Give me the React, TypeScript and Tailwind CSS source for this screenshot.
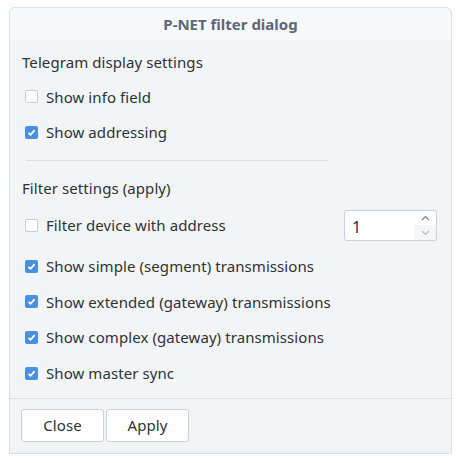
import React from "react";

function Check({ on }: { on: boolean }) {
  return on ? (
    <span className="flex h-[13px] w-[13px] items-center justify-center rounded-[2px] bg-[#4a90e2]">
      <svg width="9" height="9" viewBox="0 0 9 9">
        <path d="M1.5 4.8 L3.6 6.8 L7.6 2.2" fill="none" stroke="white" strokeWidth="1.8" />
      </svg>
    </span>
  ) : (
    <span className="block h-[13px] w-[13px] rounded-[2px] border border-[#c9ced8] bg-white" />
  );
}

function Row({ on, label }: { on: boolean; label: string }) {
  return (
    <div className="flex h-[35.7px] items-center">
      <Check on={on} />
      <span className="ml-[8px]">{label}</span>
    </div>
  );
}

export default function App() {
  return (
    <div
      className="h-[463px] w-[461px] bg-white pl-[9px] pt-[7px] text-[15px] tracking-[0.08px] text-[#2e3436]"
      style={{ fontFamily: '"Noto Sans", "Open Sans", sans-serif' }}
    >
      <div className="flex h-[447px] w-[443px] flex-col rounded-t-[6px] border border-[#dcdfe4] bg-[#f3f4f6]">
        <div className="flex h-[32px] items-center justify-center rounded-t-[6px] bg-[#f8f9fa] text-[15px] font-bold tracking-normal text-[#5f6779]">
          P-NET filter dialog
        </div>
        <div className="flex-1 px-[12px] pt-[4px]">
          <div className="h-[35px] pt-[7px]">Telegram display settings</div>
          <div className="pl-[3px]">
            <Row on={false} label="Show info field" />
            <Row on={true} label="Show addressing" />
          </div>
          <div className="ml-[4px] mt-[10px] h-px w-[302px] bg-[#dcdfe4]" />
          <div className="h-[40px] pt-[16px]">Filter settings (apply)</div>
          <div className="pl-[3px]">
            <div className="mt-[2px] flex h-[44px] items-center">
              <Check on={false} />
              <span className="ml-[8px]">Filter device with address</span>
              <div className="ml-auto mr-[2px] flex h-[31px] w-[93px] rounded-[3px] border border-[#c9d0df] bg-white">
                <span className="flex-1 pl-[7px] pt-[4px] text-[16px]">1</span>
                <div className="flex w-[22px] flex-col">
                  <div className="flex flex-1 items-center justify-center">
                    <svg width="9" height="6" viewBox="0 0 9 6">
                      <path d="M1 5 L4.5 1.5 L8 5" fill="none" stroke="#7c8290" strokeWidth="1.2" />
                    </svg>
                  </div>
                  <div className="flex flex-1 items-center justify-center rounded-br-[3px] bg-[#f5f6f8]">
                    <svg width="9" height="6" viewBox="0 0 9 6">
                      <path d="M1 1 L4.5 4.5 L8 1" fill="none" stroke="#b4b8c0" strokeWidth="1.2" />
                    </svg>
                  </div>
                </div>
              </div>
            </div>
            <div className="pt-[1px]">
              <Row on={true} label="Show simple (segment) transmissions" />
              <Row on={true} label="Show extended (gateway) transmissions" />
              <Row on={true} label="Show complex (gateway) transmissions" />
              <Row on={true} label="Show master sync" />
            </div>
          </div>
        </div>
        <div className="flex h-[55px] gap-[2px] border-t border-[#dcdfe4] px-[11px] pt-[10px]">
          <button className="h-[33px] w-[83px] rounded-[3px] border border-[#c9d0df] bg-white">Close</button>
          <button className="h-[33px] w-[83px] rounded-[3px] border border-[#c9d0df] bg-white">Apply</button>
        </div>
      </div>
    </div>
  );
}
